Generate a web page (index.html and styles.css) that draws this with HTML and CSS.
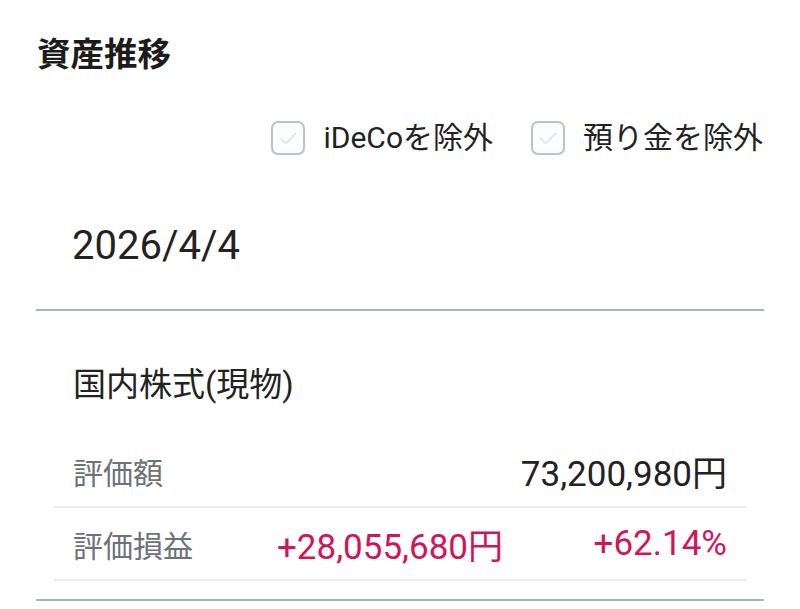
FILE: index.html
```html
<!DOCTYPE html>
<html lang="ja">
<head>
    <meta charset="UTF-8">
    <title>資産推移</title>
    <link rel="stylesheet" href="styles.css">
</head>
<body>
    <div id="asset">
        <h1 class="title">資産推移</h1>
        <div class="options">
            <label class="opt"><span class="box"><svg viewBox="0 0 34 34" width="34" height="34"><path d="M10 17.5l5 5 9.5-10" fill="none" stroke="#e2e8ef" stroke-width="2" stroke-linecap="round" stroke-linejoin="round"/></svg></span>iDeCoを除外</label>
            <label class="opt"><span class="box"><svg viewBox="0 0 34 34" width="34" height="34"><path d="M10 17.5l5 5 9.5-10" fill="none" stroke="#e2e8ef" stroke-width="2" stroke-linecap="round" stroke-linejoin="round"/></svg></span>預り金を除外</label>
        </div>
        <div class="date">2026/4/4</div>
        <div class="group">
            <div class="group-name">国内株式(現物)</div>
            <ul class="rows">
                <li class="row">
                    <span class="label">評価額</span>
                    <span class="amount">73,200,980円</span>
                </li>
                <li class="row">
                    <span class="label">評価損益</span>
                    <span class="amount plus">+28,055,680円</span>
                    <span class="rate plus">+62.14%</span>
                </li>
            </ul>
        </div>
    </div>
</body>
</html>
```
FILE: styles.css
```css
*{
    margin: 0;
    padding: 0;
    box-sizing: border-box;
}
ul,li{
    list-style: none;
}
body{
    font-family: Roboto, "Noto Sans CJK JP", sans-serif;
    color: #222;
    background: #fff;
}
#asset{
    padding: 0 36px;
}
.title{
    font-size: 33.5px;
    line-height: 40px;
    font-weight: 700;
    color: #1c1c1c;
    padding-top: 35px;
    padding-left: 1px;
}
.options{
    display: flex;
    justify-content: flex-end;
    gap: 38px;
    margin-top: 46px;
    padding-right: 1px;
}
.opt{
    display: flex;
    align-items: center;
    gap: 18px;
    font-size: 30px;
    line-height: 34px;
    color: #222;
}
.box{
    display: block;
    width: 34px;
    height: 34px;
    border: 2px solid #b9c2ce;
    border-radius: 7px;
    background: #fcfdfe;
}
.box svg{
    display: block;
    margin: -2px;
}
.date{
    font-size: 40px;
    line-height: 60px;
    padding-left: 36px;
    margin-top: 61px;
    padding-bottom: 33px;
    border-bottom: 2px solid #a9b3c0;
}
.group{
    border-bottom: 2px solid #a9b3c0;
    padding: 52px 18px 18px;
}
.group-name{
    font-size: 33px;
    line-height: 44px;
    padding-left: 19px;
    margin-bottom: 28px;
}
.row{
    display: flex;
    align-items: center;
    height: 73px;
    padding: 0 19px;
    border-bottom: 2px solid #e9ecef;
}
.label{
    font-size: 30px;
    color: #6d7178;
}
.amount{
    margin-left: auto;
    font-size: 35px;
}
.rate{
    width: 224px;
    text-align: right;
    font-size: 35px;
}
.plus{
    color: #d2145a;
}
```
